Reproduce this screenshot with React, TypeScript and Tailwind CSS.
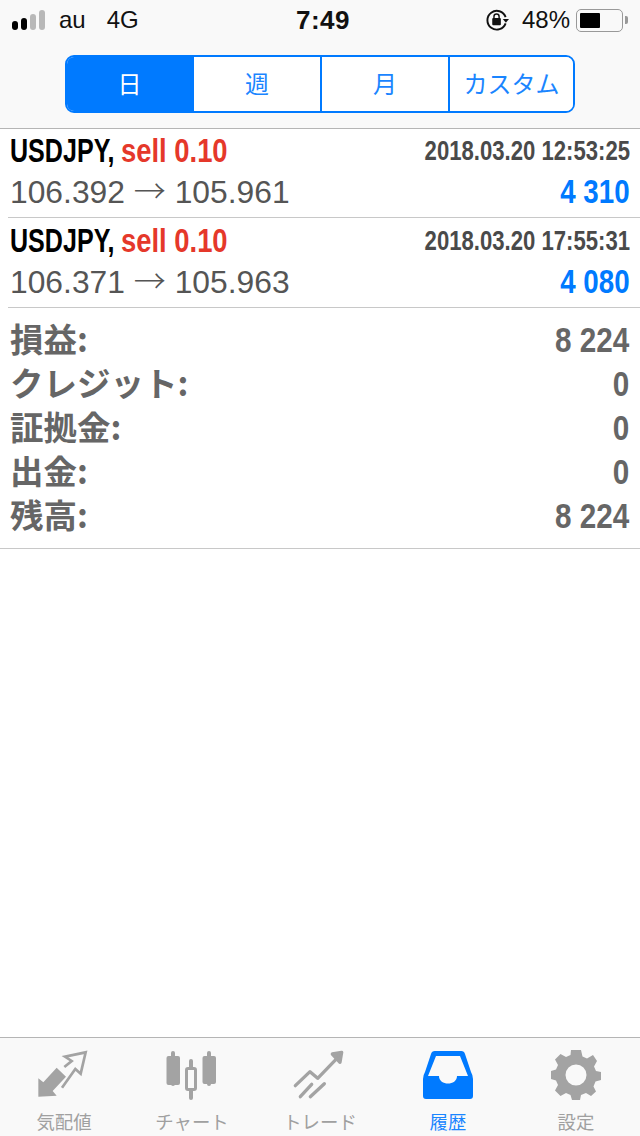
import React from "react";

const sans = "font-['Liberation_Sans','Noto_Sans_CJK_JP',sans-serif]";
const cjk = "font-['Noto_Sans_CJK_JP',sans-serif]";

function Trade({ date, from, to, profit, tall }: { date: string; from: string; to: string; profit: string; tall?: boolean }) {
  return (
    <div className={`ml-2 border-b border-[#c8c8c8] pr-[10px] pl-[2px] flex flex-col shrink-0 ${tall ? "h-[90px] pt-[1px]" : "h-[89px]"}`}>
      <div className="flex justify-between items-center h-[44px]">
        <div className="flex items-center">
          <div className="w-[111px]">
            <span className="inline-block whitespace-nowrap origin-left scale-x-[0.76] text-[33px] leading-[40px] font-bold text-black">USDJPY,</span>
          </div>
          <span className="inline-block whitespace-nowrap origin-left scale-x-[0.83] text-[33px] leading-[40px] font-bold text-[#e5382a]">sell 0.10</span>
        </div>
        <span className="inline-block whitespace-nowrap origin-right scale-x-[0.79] text-[28px] leading-[40px] font-bold text-[#4a4a4a]">{date}</span>
      </div>
      <div className="flex justify-between items-center h-[37px]">
        <span className="text-[31.8px] leading-[37px] text-[#555555] whitespace-nowrap">
          {from} <span className={`${cjk} font-light text-[32px] leading-[32px]`}>→</span> {to}
        </span>
        <span className="inline-block whitespace-nowrap origin-right scale-x-[0.84] text-[33px] leading-[37px] font-bold text-[#007aff]">{profit}</span>
      </div>
    </div>
  );
}

function Sum({ label, value }: { label: string; value: string }) {
  return (
    <div className="flex justify-between items-center h-[44px] pl-[10px] pr-[11px] text-[#666666]">
      <span className={`text-[33.5px] leading-[44px] font-bold ${cjk}`}>{label}:</span>
      <span className="inline-block whitespace-nowrap origin-right scale-x-[0.86] translate-y-[2px] text-[34.5px] leading-[44px] font-bold">{value}</span>
    </div>
  );
}

function Tab({ label, active, children }: { label: string; active?: boolean; children: React.ReactNode }) {
  return (
    <div className="w-[128px] flex flex-col items-center">
      <div className="h-[70px] flex items-start justify-center">{children}</div>
      <span className={`text-[18.4px] leading-[26px] whitespace-nowrap ${cjk} ${active ? "text-[#1a85ff]" : "text-[#a0a0a0]"}`}>{label}</span>
    </div>
  );
}

export default function App() {
  const G = "#a3a3a3";
  return (
    <div className={`w-[640px] h-[1136px] bg-white flex flex-col overflow-hidden ${sans}`}>
      <div className="h-[129px] bg-[#f9f9f9] border-b border-[#b5b5b5] shrink-0">
        <div className="h-[40px] relative flex items-center text-[24px] text-[#111] pl-[12px] pr-[12px]">
          <div className="flex items-end gap-[3px] h-[20px] w-[33px]">
            <i className="w-[6px] h-[9px] rounded-[3px] bg-black shrink-0" />
            <i className="w-[6px] h-[12px] rounded-[3px] bg-black shrink-0" />
            <i className="w-[6px] h-[16px] rounded-[3px] bg-[#b8b8b8] shrink-0" />
            <i className="w-[6px] h-[20px] rounded-[3px] bg-[#b8b8b8] shrink-0" />
          </div>
          <span className="ml-[14px]">au</span>
          <span className="ml-[21px]">4G</span>
          <span className="absolute left-[296px] font-bold text-[26px] tracking-[0.5px]">7:49</span>
          <div className="ml-auto flex items-center">
            <svg width="23" height="22" viewBox="0 0 24 23" className="mr-[13px]">
              <path d="M20.500 8.500A9.800 9.800 0 1 0 20.500 15" fill="none" stroke="#111" strokeWidth="2" />
              <path d="M17.500 10.500h6.500l-3.200 3.800z" fill="#111" />
              <rect x="6.500" y="9.500" width="9" height="7.500" rx="1" fill="#111" />
              <path d="M8.300 10V8a2.700 2.700 0 0 1 5.400 0v2" fill="none" stroke="#111" strokeWidth="1.500" />
            </svg>
            <span>48%</span>
            <div className="ml-[6px] w-[47px] h-[23px] rounded-[5px] border-[1.5px] border-[#999] pl-[3px] py-[3px] flex">
              <div className="w-[20px] bg-black rounded-[1px]" />
            </div>
            <div className="ml-[2px] w-[3px] h-[8px] bg-[#999] rounded-r-[2px]" />
          </div>
        </div>
        <div className={`mx-[65px] mt-[15px] h-[58px] flex border-2 border-[#007aff] rounded-[9px] overflow-hidden text-[24px] text-[#1a85ff] ${cjk}`}>
          <div className="w-[125px] bg-[#007aff] text-white flex items-center justify-center pb-[2px]">日</div>
          <div className="w-[128px] bg-white border-l-2 border-[#007aff] flex items-center justify-center pb-[2px]">週</div>
          <div className="w-[128px] bg-white border-l-2 border-[#007aff] flex items-center justify-center pb-[2px]">月</div>
          <div className="flex-1 bg-white border-l-2 border-[#007aff] flex items-center justify-center whitespace-nowrap pb-[2px]">カスタム</div>
        </div>
      </div>

      <Trade date="2018.03.20 12:53:25" from="106.392" to="105.961" profit="4 310" />
      <Trade tall date="2018.03.20 17:55:31" from="106.371" to="105.963" profit="4 080" />

      <div className="h-[241px] border-b border-[#c8c8c8] pt-[8px] shrink-0">
        <Sum label="損益" value="8 224" />
        <Sum label="クレジット" value="0" />
        <Sum label="証拠金" value="0" />
        <Sum label="出金" value="0" />
        <Sum label="残高" value="8 224" />
      </div>

      <div className="flex-1" />

      <div className="h-[99px] bg-[#f9f9f9] border-t border-[#b5b5b5] flex shrink-0">
        <Tab label="気配値">
          <svg width="65" height="60" viewBox="0 0 195 180" className="mt-[7px] mr-[3px]">
            <path d="M25 155 25 100 40 112 80 68 108 95 68 138 80 152Z" fill={G} />
            <path d="M103 66 125 48 105 35 167 22 152 86 136 72 96 128" fill="none" stroke={G} strokeWidth="8" />
          </svg>
        </Tab>
        <Tab label="チャート">
          <svg width="52" height="50" viewBox="0 0 52 50" className="mt-[12px]">
            <g fill={G}>
              <rect x="5" y="1" width="4" height="35" rx="2" />
              <rect x="0.500" y="6" width="13.500" height="29" rx="2" />
              <rect x="41" y="1" width="4" height="35" rx="2" />
              <rect x="36.500" y="6" width="13.500" height="28" rx="2" />
              <rect x="23" y="9" width="4" height="41" rx="2" />
            </g>
            <rect x="20.500" y="18.500" width="9" height="21" rx="1.500" fill="#f9f9f9" stroke={G} strokeWidth="3" />
          </svg>
        </Tab>
        <Tab label="トレード">
          <svg width="65" height="60" viewBox="0 0 195 180" className="mt-[7px] mr-[5px]" fill="none" stroke={G} strokeWidth="10" strokeLinecap="round" strokeLinejoin="round">
            <path d="M31 122 75 80 98 100 158 38" />
            <path d="M46 155 80 118" />
            <path d="M76 155 118 116" />
            <path d="M142 27 170 22 165 52Z" fill={G} />
          </svg>
        </Tab>
        <Tab label="履歴" active>
          <svg width="50" height="49" viewBox="0 0 50 49" className="mt-[12px]">
            <path fillRule="evenodd" fill="#007aff" d="M12 1H38a4 4 0 0 1 4 3L48 22a14 14 0 0 1 2 7V46a3 3 0 0 1-3 3H3a3 3 0 0 1-3-3V29a14 14 0 0 1 2-7L8 4a4 4 0 0 1 4-3ZM13 6 5 26H16C16 36 34 36 34 26H45L37 6Z" />
          </svg>
        </Tab>
        <Tab label="設定">
          <svg width="50" height="50" viewBox="-25 -25 50 50" className="mt-[12px]">
            <path fillRule="evenodd" fill={G} d="M-5-25H5L6.500-18.500 11-16.500 17-20 21-14 18-8.500 20-4 25-3V5L19.500 6.500 17.500 11.500 20 16.500 15 21 10 18 5 20 4 25H-4L-5.500 20-10 18-15.500 21-21 15.500-18 10-20 5.500-25 4V-4L-20-5.500-18-10-21-15.500-15.500-21-10-18-5.500-20ZM0-10.500A10.500 10.500 0 1 0 0 10.500 10.500 10.500 0 1 0 0-10.500Z" />
          </svg>
        </Tab>
      </div>
    </div>
  );
}
